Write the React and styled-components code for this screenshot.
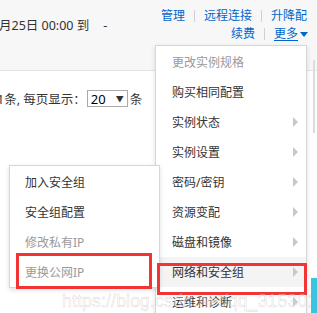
import React from 'react'
import styled, { createGlobalStyle } from 'styled-components'

const mainItems = [
  { label: '更改实例规格', disabled: true },
  { label: '购买相同配置' },
  { label: '实例状态', sub: true },
  { label: '实例设置', sub: true },
  { label: '密码/密钥', sub: true },
  { label: '资源变配', sub: true },
  { label: '磁盘和镜像', sub: true },
  { label: '网络和安全组', sub: true, active: true },
  { label: '运维和诊断', sub: true },
]

const subItems = [
  { label: '加入安全组' },
  { label: '安全组配置' },
  { label: '修改私有IP', disabled: true },
  { label: '更换公网IP', disabled: true },
]

const App = () => (
  <Page>
    <GlobalStyle />
    <Header>
      <DateText>
        月25日 00:00 到<Dash>-</Dash>
      </DateText>
      <Actions>
        <LinkRow>
          <Link>管理</Link>
          <Sep />
          <Link>远程连接</Link>
          <Sep />
          <Link>升降配</Link>
        </LinkRow>
        <LinkRow>
          <Link>续费</Link>
          <Sep />
          <Link $underline>更多</Link>
          <Caret />
        </LinkRow>
      </Actions>
    </Header>

    <Pager>
      1条, 每页显示：
      <Select>
        20<SelectArrow>▼</SelectArrow>
      </Select>
      条
    </Pager>

    <ScrollTrack />

    <MainMenu>
      {mainItems.map(item => (
        <MenuItem key={item.label} $disabled={item.disabled} $active={item.active}>
          {item.label}
          {item.sub && <SubArrow />}
        </MenuItem>
      ))}
    </MainMenu>

    <SubMenu>
      {subItems.map(item => (
        <MenuItem key={item.label} $disabled={item.disabled} $pad={15}>
          {item.label}
        </MenuItem>
      ))}
    </SubMenu>

    <Mark $left={16} $top={253} $width={136} $height={36} />
    <Mark $left={157} $top={263} $width={150} $height={32} />

    <Watermark>https://blog.csdn.net/qq_31530177</Watermark>

    <SideTab>评论</SideTab>
  </Page>
)

const GlobalStyle = createGlobalStyle`
  html, body {
    margin: 0;
    padding: 0;
    background: #fff;
  }
`

const Page = styled.div`
  position: relative;
  width: 317px;
  height: 313px;
  overflow: hidden;
  background: #fff;
  color: #333;
  font-family: "Noto Sans", "Noto Sans CJK SC", sans-serif;
  font-size: 12px;
`

const Header = styled.div`
  display: flex;
  justify-content: space-between;
  height: 71px;
  background: #f7f7f7;
  border-bottom: 1px solid #e2e2e2;
  box-sizing: border-box;
  padding-right: 10px;
`

const DateText = styled.div`
  padding-top: 17px;
  line-height: 18px;
  color: #333;
  font-size: 12.5px;
  margin-left: -1px;
`

const Dash = styled.span`
  margin-left: 14px;
`

const Actions = styled.div`
  display: flex;
  flex-direction: column;
  align-items: flex-end;
  padding-top: 7px;
`

const LinkRow = styled.div`
  display: flex;
  align-items: center;
  height: 18px;
`

const Link = styled.span`
  color: #0066cc;
  line-height: 18px;
  text-decoration: ${props => (props.$underline ? 'underline' : 'none')};
  text-underline-offset: 2px;
`

const Sep = styled.span`
  width: 1px;
  height: 12px;
  background: #d0d0d0;
  margin: 0 9px;
`

const Caret = styled.span`
  width: 0;
  height: 0;
  margin-left: 2px;
  margin-right: -1px;
  border-left: 4px solid transparent;
  border-right: 4px solid transparent;
  border-top: 5px solid #0066cc;
`

const Pager = styled.div`
  display: flex;
  align-items: center;
  padding-top: 18px;
  margin-left: -3px;
  font-size: 12.5px;
  color: #333;
`

const Select = styled.span`
  display: flex;
  align-items: center;
  justify-content: space-between;
  width: 41px;
  height: 17px;
  box-sizing: border-box;
  border: 1px solid #aaa;
  padding: 0 3px;
  margin: 0 2px 0 1px;
  font-size: 13px;
  color: #000;
`

const SelectArrow = styled.span`
  font-size: 8px;
  color: #333;
`

const ScrollTrack = styled.div`
  position: absolute;
  left: 313px;
  top: 60px;
  width: 2px;
  height: 73px;
  background: #dcdcdc;
`

const MainMenu = styled.div`
  position: absolute;
  left: 155px;
  top: 45px;
  width: 152px;
  box-sizing: border-box;
  padding: 1px 0;
  background: #fff;
  border: 1px solid #d6d6d6;
  box-shadow: 0 2px 5px rgba(0, 0, 0, 0.12);
`

const SubMenu = styled.div`
  position: absolute;
  left: 9px;
  top: 165px;
  width: 151px;
  box-sizing: border-box;
  padding: 1px 0 0;
  background: #fff;
  border: 1px solid #d6d6d6;
  box-shadow: 0 2px 5px rgba(0, 0, 0, 0.12);
`

const MenuItem = styled.div`
  position: relative;
  display: flex;
  align-items: center;
  justify-content: space-between;
  height: 30px;
  padding: 0 8px 0 ${props => props.$pad || 16}px;
  color: ${props => (props.$disabled ? '#9a9a9a' : '#333')};
  background: ${props => (props.$active ? '#f4f4f4' : 'transparent')};
  font-size: 12px;
`

const SubArrow = styled.span`
  width: 0;
  height: 0;
  border-top: 5px solid transparent;
  border-bottom: 5px solid transparent;
  border-left: 5px solid #c8c8c8;
`

const Mark = styled.div`
  position: absolute;
  left: ${props => props.$left}px;
  top: ${props => props.$top}px;
  width: ${props => props.$width}px;
  height: ${props => props.$height}px;
  box-sizing: border-box;
  border: 3px solid #f23434;
`

const Watermark = styled.div`
  position: absolute;
  left: 62px;
  top: 291px;
  font-family: "Liberation Sans", Arial, sans-serif;
  font-size: 17.5px;
  letter-spacing: 0.2px;
  color: rgba(255, 255, 255, 0.35);
  -webkit-text-stroke: 0.5px rgba(170, 170, 170, 0.45);
  white-space: nowrap;
  pointer-events: none;
`

const SideTab = styled.div`
  position: absolute;
  left: 311px;
  top: 278px;
  width: 22px;
  height: 40px;
  background: #3cc3df;
  color: #fff;
  font-size: 13px;
  line-height: 16px;
  padding: 2px 0 0 3px;
  box-sizing: border-box;
  writing-mode: vertical-rl;
`

export default App
